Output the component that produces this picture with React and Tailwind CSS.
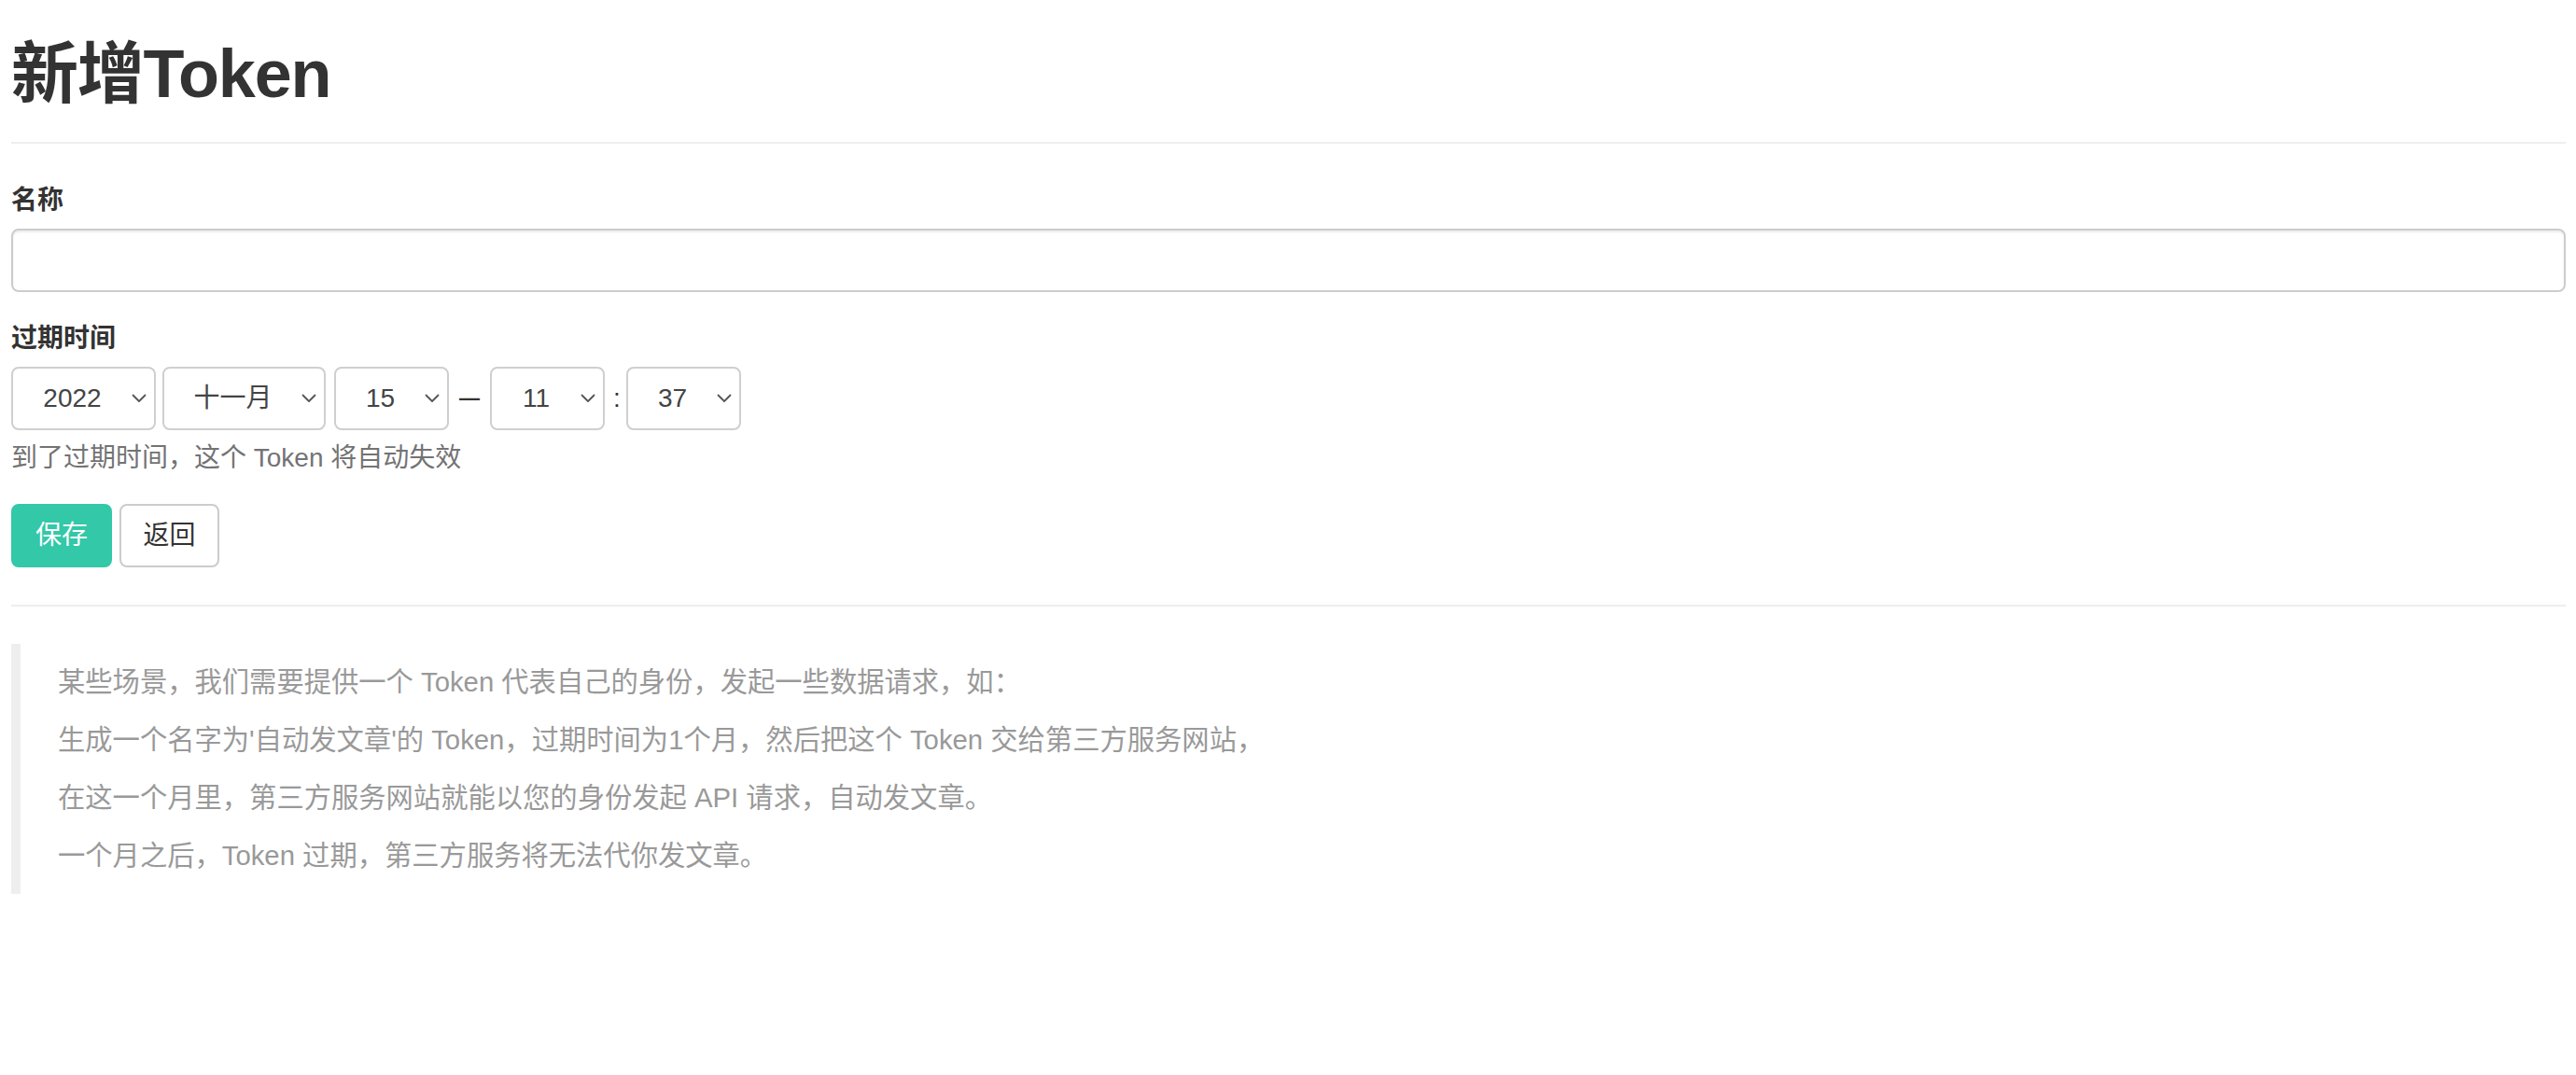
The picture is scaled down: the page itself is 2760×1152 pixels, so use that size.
import React from "react";

const FONT = { fontFamily: '"Liberation Sans", "Noto Sans CJK SC", sans-serif' };

function Chevron() {
  return (
    <svg
      className="pointer-events-none absolute right-[10px] top-1/2 -translate-y-1/2"
      width="16"
      height="10"
      viewBox="0 0 16 10"
      fill="none"
    >
      <path d="M1.5 1.5 L8 8 L14.5 1.5" stroke="#555" strokeWidth="1.8" strokeLinecap="round" strokeLinejoin="round" />
    </svg>
  );
}

function Select({ value, options, widthClass, className = "" }) {
  return (
    <div className={`relative ${widthClass} ${className}`}>
      <select
        defaultValue={value}
        className="h-[68px] w-full appearance-none rounded-[8px] border-2 border-[#cfcfcf] bg-white pl-[24px] pr-[48px] text-center text-[28px] leading-[40px] text-[#444] outline-none [text-align-last:center]"
        style={FONT}
      >
        {options.map((o) => (
          <option key={o} value={o}>
            {o}
          </option>
        ))}
      </select>
      <Chevron />
    </div>
  );
}

const range = (a, b) => Array.from({ length: b - a + 1 }, (_, i) => String(a + i));
const pad = (arr) => arr.map((s) => s.padStart(2, "0"));

export default function App() {
  const months = ["一月", "二月", "三月", "四月", "五月", "六月", "七月", "八月", "九月", "十月", "十一月", "十二月"];
  return (
    <div className="min-h-screen bg-white pl-[12px] pr-[11px] text-[#333]" style={FONT}>
      <div className="mt-[40px] border-b-2 border-[#eeeeee] pb-[33px]">
        <h1 className="text-[72px] font-bold leading-[79px] tracking-[-1.2px] text-[#333]">新增Token</h1>
      </div>

      <form className="mt-[41px]" onSubmit={(e) => e.preventDefault()}>
        <div>
          <label className="block text-[28px] font-bold leading-[40px] text-[#333]">名称</label>
          <input
            type="text"
            className="mt-[10px] block h-[68px] w-full rounded-[8px] border-2 border-[#cccccc] bg-white px-[24px] text-[28px] text-[#555] shadow-[inset_0_2px_2px_rgba(0,0,0,0.075)] outline-none"
            style={FONT}
          />
        </div>

        <div className="mt-[30px]">
          <label className="block text-[28px] font-bold leading-[40px] text-[#333]">过期时间</label>
          <div className="mt-[10px] flex items-center">
            <Select value="2022" options={range(2022, 2032)} widthClass="w-[155px]" />
            <Select value="十一月" options={months} widthClass="w-[175px]" className="ml-[7px]" />
            <Select value="15" options={range(1, 30)} widthClass="w-[123px]" className="ml-[9px]" />
            <span className="ml-[11px] w-[22px] text-center text-[22px] font-bold leading-[40px] text-[#333]">—</span>
            <Select value="11" options={pad(range(0, 23))} widthClass="w-[123px]" className="ml-[11px]" />
            <span className="ml-[9px] w-[8px] text-center text-[28px] leading-[40px] text-[#333]">:</span>
            <Select value="37" options={pad(range(0, 59))} widthClass="w-[123px]" className="ml-[6px]" />
          </div>
          <p className="mt-[10px] text-[28px] leading-[40px] text-[#737373]">到了过期时间，这个 Token 将自动失效</p>
        </div>

        <div className="mt-[29px] flex items-center">
          <button
            type="submit"
            className="h-[68px] w-[108px] rounded-[8px] border-2 border-[#32c8a8] bg-[#32c8a8] text-[28px] leading-[40px] text-white"
            style={FONT}
          >
            保存
          </button>
          <button
            type="button"
            className="ml-[8px] h-[68px] w-[107px] rounded-[8px] border-2 border-[#cccccc] bg-white text-[28px] leading-[40px] text-[#333]"
            style={FONT}
          >
            返回
          </button>
        </div>
      </form>

      <div className="mt-[40px] h-[2px] bg-[#eeeeee]" />

      <blockquote className="mt-[40px] border-l-[10px] border-[#eeeeee] py-[20px] pl-[40px] text-[29.3px] leading-[42px] text-[#999999]">
        <p className="mb-[20px]">某些场景，我们需要提供一个 Token 代表自己的身份，发起一些数据请求，如：</p>
        <p className="mb-[20px]">生成一个名字为'自动发文章'的 Token，过期时间为1个月，然后把这个 Token 交给第三方服务网站，</p>
        <p className="mb-[20px]">在这一个月里，第三方服务网站就能以您的身份发起 API 请求，自动发文章。</p>
        <p>一个月之后，Token 过期，第三方服务将无法代你发文章。</p>
      </blockquote>
    </div>
  );
}
